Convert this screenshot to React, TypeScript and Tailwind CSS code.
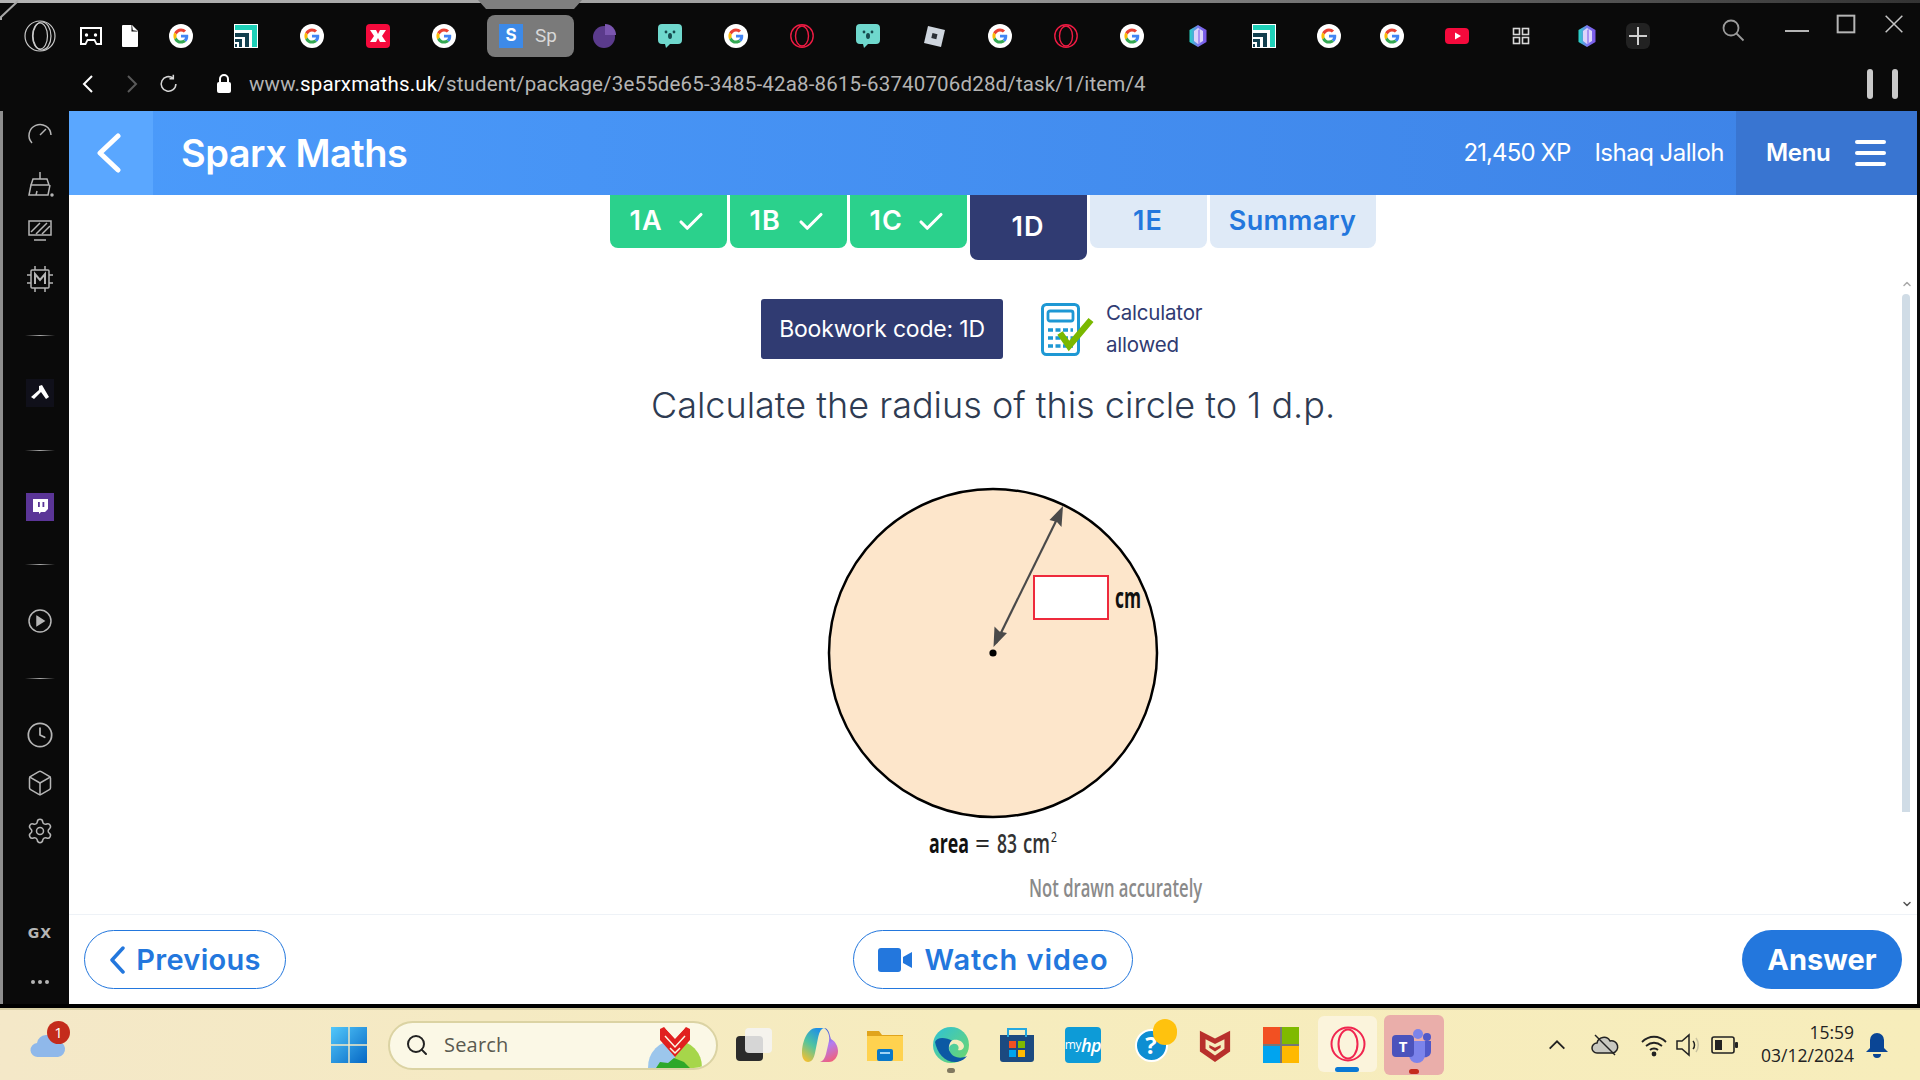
import React from "react";
import { Clock, Box, Settings, ChevronUp, ChevronDown, Check, Search } from "lucide-react";

function G({ className = "" }: { className?: string }) {
  return (
    <svg viewBox="0 0 24 24" className={`w-6 h-6 shrink-0 ${className}`}>
      <circle cx="12" cy="12" r="12" fill="#fff" />
      <g transform="translate(4.4 4.4) scale(0.316)">
        <path fill="#EA4335" d="M24 9.5c3.54 0 6.71 1.22 9.21 3.6l6.85-6.85C35.9 2.38 30.47 0 24 0 14.62 0 6.51 5.38 2.56 13.22l7.98 6.19C12.43 13.72 17.74 9.5 24 9.5z" />
        <path fill="#4285F4" d="M46.98 24.55c0-1.57-.15-3.09-.38-4.55H24v9.02h12.94c-.58 2.96-2.26 5.48-4.78 7.18l7.73 6c4.51-4.18 7.09-10.36 7.09-17.65z" />
        <path fill="#FBBC05" d="M10.53 28.59c-.48-1.45-.76-2.99-.76-4.59s.27-3.14.76-4.59l-7.98-6.19C.92 16.46 0 20.12 0 24c0 3.88.92 7.54 2.56 10.78l7.97-6.19z" />
        <path fill="#34A853" d="M24 48c6.48 0 11.93-2.13 15.89-5.81l-7.73-6c-2.15 1.45-4.92 2.3-8.16 2.3-6.26 0-11.57-4.22-13.47-9.91l-7.98 6.19C6.51 42.62 14.62 48 24 48z" />
      </g>
    </svg>
  );
}
function Teal({ className = "" }: { className?: string }) {
  return (
    <svg viewBox="0 0 24 24" className={`w-6 h-6 shrink-0 ${className}`}>
      <rect width="24" height="24" fill="#fff" />
      <path fill="#1fd1b9" d="M1 1h22v22h-5V6H1z" />
      <path fill="#123f4e" d="M1 9h14v14h-4V13H1zM1 15h7v8H5v-5H1zM1 20h2v3H1z" />
    </svg>
  );
}
function Chat({ className = "" }: { className?: string }) {
  return (
    <svg viewBox="0 0 24 24" className={`w-6 h-6 shrink-0 ${className}`}>
      <path fill="#6fd8cd" d="M4 0h16a4 4 0 0 1 4 4v12a4 4 0 0 1-4 4h-8l-4 4-1-4H4a4 4 0 0 1-4-4V4a4 4 0 0 1 4-4z" />
      <circle cx="8" cy="8" r="1.4" fill="#174b4f" />
      <circle cx="16" cy="8" r="1.4" fill="#174b4f" />
      <ellipse cx="12" cy="12" rx="2" ry="3" fill="#174b4f" />
    </svg>
  );
}
function OperaRed({ className = "" }: { className?: string }) {
  return (
    <svg viewBox="0 0 24 24" className={`w-6 h-6 shrink-0 ${className}`} fill="none" stroke="#ee1b43" strokeWidth="1.4">
      <circle cx="12" cy="12" r="11.2" />
      <ellipse cx="12" cy="12" rx="6.5" ry="10" />
    </svg>
  );
}
function Hex({ className = "" }: { className?: string }) {
  return (
    <svg viewBox="0 0 24 24" className={`w-6 h-6 shrink-0 ${className}`}>
      <defs>
        <linearGradient id="hexg" x1="0" x2="1" y1="0" y2="0">
          <stop offset="0" stopColor="#25d5c5" />
          <stop offset="0.5" stopColor="#7a7af0" />
          <stop offset="1" stopColor="#7b55e8" />
        </linearGradient>
      </defs>
      <path fill="url(#hexg)" d="M12 1l8.5 5v12L12 23l-8.5-5V6z" />
      <path fill="#dcd4fb" d="M12 4l5 3v10l-5 3-4-3V7z" />
      <path fill="#a893f2" d="M12 6l2-1v14l-2 1z" />
    </svg>
  );
}

function TabIcons() {
  return (
    <div className="flex items-center h-[42px]">
      <svg viewBox="0 0 32 32" className="w-8 h-8 ml-6 shrink-0" fill="none" stroke="#c9c9c9" strokeWidth="1.2">
        <circle cx="16" cy="16" r="15" />
        <ellipse cx="18" cy="16" rx="9" ry="14" />
        <ellipse cx="16" cy="16" rx="7.5" ry="13" />
      </svg>
      <svg viewBox="0 0 24 24" className="w-6 h-6 ml-[23px] shrink-0">
        <path fill="#fff" d="M1 3h22v18h-6l-2-4H9l-2 4H1z" />
        <path fill="#0a0a0a" d="M3 5h18v14h-3l-2-4H8l-2 4H3z" />
        <circle cx="7.5" cy="11" r="1.7" fill="#fff" />
        <circle cx="16.5" cy="11" r="1.7" fill="#fff" />
      </svg>
      <svg viewBox="0 0 24 24" className="w-6 h-6 ml-[15px] shrink-0">
        <path fill="#fff" d="M5 1h9l6 6v15a1 1 0 0 1-1 1H5a1 1 0 0 1-1-1V2a1 1 0 0 1 1-1z" />
        <path fill="#0a0a0a" d="M14 1l.8 5.2L20 7l-1 .6h-5.5V1z" />
      </svg>
      <G className="ml-[27px]" />
      <Teal className="ml-[41px]" />
      <G className="ml-[42px]" />
      <svg viewBox="0 0 24 24" className="w-6 h-6 ml-[42px] shrink-0">
        <rect width="24" height="24" rx="4" fill="#f50a3c" />
        <path fill="#fff" d="M4 6h6l2 4 2-4h6l-4 6 4 6h-6l-2-4-2 4H4l4-6z" />
      </svg>
      <G className="ml-[42px]" />
      <div className="ml-[31px] w-[87px] h-[42px] rounded-lg bg-[#7a7a7a] flex items-center pl-3 shrink-0 relative">
        <div className="w-6 h-6 bg-[#3d8ae8] flex items-center justify-center text-white text-[17px] font-bold font-['Inter',sans-serif]">S</div>
        <span className="ml-[12px] w-[26px] overflow-hidden text-[#d8d8d8] text-[19px] font-['Roboto',sans-serif]">Sp</span>
        <div className="absolute right-[9px] top-[10px] w-[10px] h-[22px] bg-gradient-to-r from-transparent to-[#7a7a7a]" />
      </div>
      <svg viewBox="0 0 24 24" className="w-6 h-6 ml-[18px] shrink-0">
        <circle cx="12" cy="13" r="11" fill="#5b3b8c" />
        <path fill="#7b56b0" d="M13 0a11 11 0 0 1 11 11H13z" />
      </svg>
      <Chat className="ml-[42px]" />
      <G className="ml-[42px]" />
      <OperaRed className="ml-[42px]" />
      <Chat className="ml-[42px]" />
      <svg viewBox="0 0 24 24" className="w-6 h-6 ml-[42px] shrink-0">
        <path fill="#cfd6de" d="M6 2l17 4-4 17L2 19z" />
        <path fill="#2a2f36" d="M10.5 9l5 1.2-1.2 5-5-1.2z" />
      </svg>
      <G className="ml-[42px]" />
      <OperaRed className="ml-[42px]" />
      <G className="ml-[42px]" />
      <Hex className="ml-[42px]" />
      <Teal className="ml-[42px]" />
      <G className="ml-[41px]" />
      <G className="ml-[39px]" />
      <svg viewBox="0 0 24 24" className="w-6 h-6 ml-[41px] shrink-0">
        <rect y="4" width="24" height="16" rx="4" fill="#f50a3c" />
        <path fill="#fff" d="M10 8.5l6 3.5-6 3.500z" />
      </svg>
      <svg viewBox="0 0 24 24" className="w-6 h-6 ml-10 shrink-0" fill="none" stroke="#d8d8d8" strokeWidth="1.6">
        <rect x="4.500" y="4.500" width="6" height="6" />
        <rect x="13.500" y="4.500" width="6" height="6" />
        <rect x="4.500" y="13.500" width="6" height="6" />
        <rect x="13.500" y="13.500" width="6" height="6" />
      </svg>
      <Hex className="ml-[42px]" />
      <div className="ml-[27px] w-6 h-[26px] rounded-md bg-[#222222] flex items-center justify-center shrink-0">
        <svg viewBox="0 0 20 20" className="w-5 h-5" stroke="#d0d0d0" strokeWidth="2"><path d="M10 1v18M1 10h18" /></svg>
      </div>
    </div>
  );
}

function TopChrome() {
  return (
    <div className="h-[111px] shrink-0 relative bg-[#0a0a0a]">
      <div className="h-[3px] bg-gradient-to-r from-[#b4b4b4] via-[#9a9a9a] to-[#333333]" />
      <svg viewBox="0 0 20 20" className="absolute left-0 top-0 w-5 h-5" fill="none" stroke="#a8a8a8" strokeWidth="2"><path d="M1 20v-3L18 1" /></svg>
      <svg viewBox="0 0 104 10" className="absolute left-[478px] top-0 w-[104px] h-[10px]"><path fill="#7f7f7f" d="M0 0h104l-8 9H8z" /></svg>
      <div className="flex items-start justify-between pt-[12px] pr-[16px]">
        <TabIcons />
        <div className="flex items-start">
          <svg viewBox="0 0 24 24" className="w-6 h-6 mt-[3px]" fill="none" stroke="#9b9b9b" strokeWidth="1.800"><circle cx="10" cy="10" r="7.500" /><path d="M15.500 15.500l7 7" /></svg>
          <svg viewBox="0 0 24 24" className="w-6 h-6 ml-10" stroke="#b5b5b5" strokeWidth="2"><path d="M0 16h24" /></svg>
          <svg viewBox="0 0 24 24" className="w-[20px] h-[20px] ml-[27px] -mt-px" fill="none" stroke="#b5b5b5" strokeWidth="2.400"><rect x="2" y="2" width="20" height="20" /></svg>
          <svg viewBox="0 0 24 24" className="w-[20px] h-[20px] ml-7 -mt-px" stroke="#c5c5c5" strokeWidth="1.800"><path d="M2 2l20 20M22 2L2 22" /></svg>
        </div>
      </div>
      <div className="flex items-center mt-[9px] h-[36px] relative">
        <svg viewBox="0 0 24 24" className="w-6 h-6 ml-[77px]" fill="none" stroke="#ffffff" strokeWidth="2"><path d="M15 4l-8 8 8 8" /></svg>
        <svg viewBox="0 0 24 24" className="w-6 h-6 ml-[18px]" fill="none" stroke="#5a5a5a" strokeWidth="2"><path d="M9 4l8 8-8 8" /></svg>
        <svg viewBox="0 0 24 24" className="w-[22px] h-[22px] ml-[15px]" fill="none" stroke="#d6d6d6" strokeWidth="1.700"><path d="M19.500 12a8 8 0 1 1-3-6.300" /><path d="M16.700 2v4.200h-4.200" /></svg>
        <svg viewBox="0 0 16 20" className="w-4 h-5 ml-[36px]"><rect x="1" y="8" width="14" height="11" rx="2" fill="#fff" /><path d="M4 9V5a4 4 0 0 1 8 0v4" fill="none" stroke="#fff" strokeWidth="2" /></svg>
        <div className="ml-[17px] text-[20.500px] tracking-[0.16px] text-[#b4b4b4] whitespace-nowrap font-['Roboto',sans-serif]">
          www.<span className="text-white">sparxmaths.uk</span>/student/package/3e55de65-3485-42a8-8615-63740706d28d/task/1/item/4
        </div>
        <div className="ml-auto mr-[22px] flex gap-[19px]">
          <div className="w-[6px] h-[30px] rounded-[3px] bg-[#c9c9c9]" />
          <div className="w-[6px] h-[30px] rounded-[3px] bg-[#c9c9c9]" />
        </div>
      </div>
    </div>
  );
}

function SideSep({ className }: { className: string }) {
  return <div className={`w-[30px] h-px shrink-0 bg-gradient-to-r from-transparent via-[#aaaaaa] to-transparent ${className}`} />;
}

function Sidebar() {
  return (
    <div className="w-[69px] shrink-0 flex flex-col items-center bg-[#0a0a0a] border-l-[3px] border-[#8f8f8f] pl-2">
      <svg viewBox="0 0 28 28" className="w-7 h-7 mt-[10px] shrink-0" fill="none" stroke="#b5b5b5" strokeWidth="1.500"><path d="M6 22A11 11 0 1 1 25 14" /><path d="M14 14l6-6" /></svg>
      <svg viewBox="0 0 28 28" className="w-7 h-7 mt-[21px] shrink-0" fill="none" stroke="#b5b5b5" strokeWidth="1.500"><path d="M14 2v7M7 9h14l2 6H5zM5 15l-2 10h19l2-10M10 25l1-4" /><circle cx="26" cy="25" r="1" fill="#b5b5b5" /></svg>
      <svg viewBox="0 0 28 28" className="w-7 h-7 mt-[18px] shrink-0" fill="none" stroke="#b5b5b5" strokeWidth="1.500"><rect x="3" y="5" width="22" height="14" /><path d="M5 16L14 7M10 18L21 7M16 18l8-8M8 24h12" /></svg>
      <svg viewBox="0 0 28 28" className="w-7 h-7 mt-[21px] shrink-0" fill="none" stroke="#b5b5b5" strokeWidth="1.500">
        <rect x="5" y="5" width="18" height="18" rx="1" />
        <path d="M9 1v4M19 1v4M9 23v4M19 23v4M1 10h4M1 18h4M23 10h4M23 18h4" />
        <path strokeWidth="2" d="M9 19V9l5 6 5-6v10" />
      </svg>
      <SideSep className="mt-[42px]" />
      <div className="w-7 h-7 mt-[43px] shrink-0 bg-[#10101a] flex items-center justify-center">
        <svg viewBox="0 0 20 20" className="w-5 h-5"><path fill="#fff" d="M9 3l3-1 7 12-3 2-5-7-7 7-3-2 8-7z" /></svg>
      </div>
      <SideSep className="mt-[43px]" />
      <div className="w-7 h-7 mt-[42px] shrink-0 bg-[#5b3597] flex items-center justify-center">
        <svg viewBox="0 0 20 20" className="w-5 h-5"><path fill="#fff" d="M3 2h15v10l-3 3h-4l-2 2v-2H3z" /><path fill="#5b3597" d="M8 5h1.800v5H8zM12.500 5h1.800v5h-1.800z" /></svg>
      </div>
      <SideSep className="mt-[43px]" />
      <svg viewBox="0 0 28 28" className="w-7 h-7 mt-[42px] shrink-0" fill="none" stroke="#b5b5b5" strokeWidth="1.500"><circle cx="14" cy="14" r="11" /><path fill="#b5b5b5" d="M11 9.500l7 4.500-7 4.500z" /></svg>
      <SideSep className="mt-[43px]" />
      <Clock className="w-7 h-7 mt-[42px] shrink-0 text-[#b5b5b5]" strokeWidth={1.500} />
      <Box className="w-7 h-7 mt-5 shrink-0 text-[#b5b5b5]" strokeWidth={1.300} />
      <Settings className="w-7 h-7 mt-5 shrink-0 text-[#b5b5b5]" strokeWidth={1.300} />
      <div className="h-5 mt-[78px] shrink-0 text-[14px] leading-5 font-semibold tracking-[1px] text-[#b5b5b5] font-['DejaVu_Sans',sans-serif]">GX</div>
      <div className="flex gap-[3px] mt-[29px] h-5 items-center shrink-0">
        <div className="w-1 h-1 rounded-full bg-[#b5b5b5]" />
        <div className="w-1 h-1 rounded-full bg-[#b5b5b5]" />
        <div className="w-1 h-1 rounded-full bg-[#b5b5b5]" />
      </div>
    </div>
  );
}

function Header() {
  return (
    <div className="h-[84px] shrink-0 flex items-stretch text-white bg-gradient-to-r from-[#4b9bfb] to-[#3d82e6] font-['Inter',sans-serif]">
      <div className="w-[84px] flex items-center justify-center bg-[#5aa7ff] pr-1">
        <svg viewBox="0 0 28 40" className="w-[28px] h-[40px]" fill="none" stroke="#fff" strokeWidth="5" strokeLinecap="round" strokeLinejoin="round"><path d="M23 3L5 20l18 17" /></svg>
      </div>
      <div className="ml-7 self-center text-[38px] font-semibold tracking-[-0.500px]">Sparx Maths</div>
      <div className="ml-auto self-center text-[24px] tracking-[-0.900px]">21,450 XP</div>
      <div className="ml-6 self-center text-[24px] tracking-[-0.500px]">Ishaq Jalloh</div>
      <div className="ml-3 w-[181px] bg-[#3975d1] flex items-center pl-[30px]">
        <span className="text-[24px] font-semibold tracking-[-0.300px]">Menu</span>
        <div className="ml-6 flex flex-col gap-[7px]">
          <div className="w-[31px] h-1 rounded-full bg-white" />
          <div className="w-[31px] h-1 rounded-full bg-white" />
          <div className="w-[31px] h-1 rounded-full bg-white" />
        </div>
      </div>
    </div>
  );
}

function DoneTab({ label }: { label: string }) {
  return (
    <div className="w-[117px] h-[53px] rounded-b-lg bg-[#2bd18c] text-white flex items-center pl-5 text-[27px] font-semibold tracking-[1px]">
      <span>{label}</span>
      <Check className="w-[30px] h-[30px] ml-auto mr-[21px]" strokeWidth={2.500} />
    </div>
  );
}

function Tabs() {
  return (
    <div className="flex justify-center items-start gap-[3px] pr-px font-['Inter',sans-serif]">
      <DoneTab label="1A" />
      <DoneTab label="1B" />
      <DoneTab label="1C" />
      <div className="w-[117px] h-[65px] rounded-b-lg bg-[#303b72] text-white flex items-center justify-center text-[27px] font-semibold tracking-[1px]">1D</div>
      <div className="w-[117px] h-[53px] rounded-b-lg bg-[#dfeaf7] text-[#2377dd] flex items-center justify-center text-[27px] font-semibold tracking-[1px]">1E</div>
      <div className="w-[166px] h-[53px] rounded-b-lg bg-[#dfeaf7] text-[#2377dd] flex items-center justify-center text-[27px] font-semibold tracking-[0.300px]">Summary</div>
    </div>
  );
}

function CalcIcon() {
  return (
    <svg viewBox="0 0 53 53" className="w-[53px] h-[53px]" fill="none">
      <rect x="1.500" y="1.500" width="36" height="50" rx="4" stroke="#1e98d4" strokeWidth="3" />
      <rect x="7" y="8" width="25" height="10" rx="2" stroke="#1e98d4" strokeWidth="2.800" />
      <path stroke="#1e98d4" strokeWidth="3.500" strokeDasharray="5 2.500" d="M7 27h25M7 35h25M7 43h25" />
      <path stroke="#7ab800" strokeWidth="6.500" d="M19 30l9 13L50 17" />
    </svg>
  );
}

function Diagram() {
  const font = "'Open Sans',sans-serif";
  return (
    <div className="relative w-[420px] h-[430px] mx-auto mt-[48px] shrink-0">
      <svg viewBox="0 0 420 430" className="w-[420px] h-[430px]">
        <circle cx="210" cy="173" r="164" fill="#fde6cb" stroke="#000" strokeWidth="2.500" />
        <path d="M213 163L277 33" stroke="#4a4a4a" strokeWidth="2.200" />
        <path fill="#4a4a4a" d="M280 26l-1.500 21-4.500-5-7.500-2zM210.500 167l1-20.500 5 5 7.500 1.500z" />
        <circle cx="210" cy="173" r="3.600" fill="#000" />
        <text transform="translate(332 128) scale(0.62 1)" fontSize="28" fontWeight="700" fontFamily={font} textLength="42" lengthAdjust="spacingAndGlyphs" fill="#111">cm</text>
        <text transform="translate(146 373) scale(0.667 1)" fontSize="27" fontWeight="700" fontFamily={font} textLength="60" lengthAdjust="spacingAndGlyphs" fill="#111">area</text>
        <text transform="translate(192 373)" fontSize="27" fontFamily={font} textLength="15" lengthAdjust="spacingAndGlyphs" fill="#222">=</text>
        <text transform="translate(214 373) scale(0.645 1)" fontSize="27" fontWeight="600" fontFamily={font} textLength="31" lengthAdjust="spacingAndGlyphs" fill="#333">83</text>
        <text transform="translate(240 373) scale(0.71 1)" fontSize="27" fontWeight="600" fontFamily={font} textLength="38" lengthAdjust="spacingAndGlyphs" fill="#333">cm</text>
        <text transform="translate(268 362) scale(0.75 1)" fontSize="14" fontFamily={font} textLength="8" lengthAdjust="spacingAndGlyphs" fill="#222">2</text>
        <text transform="translate(246 417) scale(0.63 1)" fontSize="26" fontWeight="600" fontFamily={font} textLength="275" lengthAdjust="spacingAndGlyphs" fill="#8a8a8a">Not drawn accurately</text>
      </svg>
      <div className="absolute left-[250px] top-[95px] w-[76px] h-[45px] bg-white border-2 border-[#ee2a3c]" />
    </div>
  );
}

function Main() {
  return (
    <div className="flex-1 min-h-0 relative bg-white overflow-hidden">
      <Tabs />
      <div className="flex justify-center items-center mt-[37px] font-['Inter',sans-serif]">
        <div className="w-[242px] h-[60px] rounded-[3px] bg-[#303b72] text-white flex items-center justify-center text-[23px] tracking-[-0.200px]">Bookwork code: 1D</div>
        <div className="ml-[38px]"><CalcIcon /></div>
        <div className="ml-3 w-[119px] text-[20.500px] leading-[32px] text-[#303b72] tracking-[-0.200px]">
          <div>Calculator</div>
          <div>allowed</div>
        </div>
      </div>
      <div className="mt-[17px] h-[54px] leading-[54px] text-center text-[36px] font-light text-[#2e3b52] font-['Inter',sans-serif]">Calculate the radius of this circle to 1 d.p.</div>
      <Diagram />
      <div className="absolute right-[7px] top-[99px] bottom-[102px] w-2 rounded-t-sm bg-[#d0dce6]" />
      <ChevronUp className="absolute right-[4px] top-[83px] w-3 h-3 text-[#aaaaaa]" strokeWidth={3} />
      <ChevronDown className="absolute right-[4px] bottom-[4px] w-3 h-3 text-[#555555]" strokeWidth={3} />
    </div>
  );
}

function Footer() {
  return (
    <div className="h-[90px] shrink-0 border-t border-[#eef2f7] bg-white grid grid-cols-[1fr_auto_1fr] items-center pl-[15px] pr-[15px] font-['Inter',sans-serif]">
      <div className="justify-self-start w-[202px] h-[59px] rounded-full border border-[#2377dd] flex items-center justify-center text-[#2377dd] text-[29px] font-semibold tracking-[0.300px]">
        <svg viewBox="0 0 16 30" className="w-4 h-[30px] mr-[11px]" fill="none" stroke="#2377dd" strokeWidth="3.500" strokeLinecap="round" strokeLinejoin="round"><path d="M14 3L3 15l11 12" /></svg>
        Previous
      </div>
      <div className="w-[280px] h-[59px] rounded-full border border-[#2377dd] flex items-center justify-center text-[#2377dd] text-[29px] font-semibold tracking-[0.900px]">
        <svg viewBox="0 0 34 24" className="w-[34px] h-6 mr-[13px]" fill="#2377dd"><rect width="23" height="24" rx="3" /><path d="M25 9l9-5v16l-9-5z" /></svg>
        Watch video
      </div>
      <div className="justify-self-end w-[160px] h-[59px] rounded-full bg-[#2377dd] flex items-center justify-center text-white text-[29px] font-bold">Answer</div>
    </div>
  );
}

function TaskIcon({ className, children }: { className: string; children: React.ReactNode }) {
  return <div className={`w-9 h-9 shrink-0 flex items-center justify-center ${className}`}>{children}</div>;
}

function Taskbar() {
  return (
    <div className="h-[72px] shrink-0 border-t-2 border-[#d8cfa5] bg-gradient-to-r from-[#f4e8c8] via-[#f6ecbe] to-[#f7edbb] flex items-center relative font-['Open_Sans',sans-serif]">
      <div className="relative ml-[30px] -mt-1 w-9 h-9 shrink-0">
        <svg viewBox="0 0 36 36" className="w-9 h-9"><path fill="#8fb8ea" d="M8 32a7 7 0 0 1-1-14 10 10 0 0 1 19-2 8 8 0 0 1 2 16z" /></svg>
        <div className="absolute left-[17px] -top-1 w-[23px] h-[23px] rounded-full bg-[#c42b1c] text-white text-[15px] flex items-center justify-center">1</div>
      </div>
      <svg viewBox="0 0 36 36" className="w-9 h-9 ml-[265px] shrink-0">
        <defs><linearGradient id="win" x1="0" y1="0" x2="1" y2="1"><stop offset="0" stopColor="#52c8fb" /><stop offset="1" stopColor="#0667c4" /></linearGradient></defs>
        <path fill="url(#win)" d="M0 0h17.300v17.300H0zM18.700 0H36v17.300H18.700zM0 18.700h17.300V36H0zM18.700 18.700H36V36H18.700z" />
      </svg>
      <div className="ml-[21px] w-[330px] h-[49px] shrink-0 rounded-full bg-[#fbf8e6] border-2 border-[#dbd3a3] flex items-center pl-[15px] overflow-hidden relative">
        <Search className="w-6 h-6 text-[#222222]" strokeWidth={2} />
        <span className="ml-[15px] text-[20px] text-[#5a5a50] tracking-[0.2px]">Search</span>
        <svg viewBox="0 0 58 42" className="absolute right-[12px] bottom-0 w-[58px] h-[42px]">
          <path fill="#9cc6ec" d="M2 42a27 27 0 0 1 27-28v28z" />
          <path fill="#a6d64a" d="M29 14a27 27 0 0 1 27 28H29z" />
          <path fill="#2ea829" d="M10 42l4-6 8 1 6-5 10 4 6 6z" />
          <path fill="#e1201f" d="M14 3l4-2 11 11 11-11 4 2 0 11-15 17-15-17z" />
          <path stroke="#fbf8e6" strokeWidth="1.500" fill="none" d="M20 2l9 10 9-10M19 10l10 11 10-11M24 22l5 5 5-5" />
        </svg>
      </div>
      <TaskIcon className="ml-[18px]">
        <div className="relative w-9 h-9">
          <div className="absolute left-0 bottom-[2px] w-[27px] h-[25px] rounded-sm bg-[#2b2b2b]" />
          <div className="absolute left-[9px] top-[1px] w-[27px] h-[25px] rounded-sm bg-[#f4f4f4]/85" />
        </div>
      </TaskIcon>
      <TaskIcon className="ml-[30px]">
        <svg viewBox="0 0 36 36" className="w-9 h-9">
          <defs>
            <linearGradient id="copa" x1="0.7" y1="0" x2="0.2" y2="1"><stop offset="0" stopColor="#1f8fe8" /><stop offset="0.5" stopColor="#4fc4a0" /><stop offset="1" stopColor="#f5c030" /></linearGradient>
            <linearGradient id="copb" x1="0.3" y1="0" x2="0.6" y2="1"><stop offset="0" stopColor="#2a5fd8" /><stop offset="0.5" stopColor="#b37cf0" /><stop offset="1" stopColor="#f0607c" /></linearGradient>
          </defs>
          <path fill="url(#copa)" d="M14 1h8c-4 1-5 6-6 10l-3 15c-1 5-3 9-7 9-3 0-6-3-6-9C0 14 6 1 14 1z" />
          <path fill="url(#copb)" d="M22 1c3 0 5 3 6 8l1 3c4 2 7 7 7 12 0 6-4 11-9 11h-9c3-1 5-4 6-8l3-13c1-5-1-11-5-13z" />
        </svg>
      </TaskIcon>
      <TaskIcon className="ml-[29px]">
        <svg viewBox="0 0 36 36" className="w-9 h-9">
          <path fill="#e0a41c" d="M0 4h12l3 4h21v26H0z" />
          <path fill="#ffd24f" d="M0 9h36v25H0z" />
          <rect x="10" y="22" width="16" height="12" rx="2" fill="#0a78c8" />
          <rect x="13" y="25" width="10" height="2" fill="#9fd4f4" />
        </svg>
      </TaskIcon>
      <TaskIcon className="ml-[30px] relative">
        <svg viewBox="0 0 36 36" className="w-9 h-9">
          <defs><linearGradient id="edge" x1="0" y1="0" x2="1" y2="1"><stop offset="0" stopColor="#2dc1d8" /><stop offset="1" stopColor="#70d868" /></linearGradient></defs>
          <circle cx="18" cy="18" r="18" fill="url(#edge)" />
          <path fill="#0c59a4" d="M2 15C4 26 12 36 24 35c5-1 8-3 10-6-6 3-14 2-17-4-3-5 0-9 3-11C12 10 4 10 2 15z" />
          <path fill="#f6ecbe" d="M20 13c5-1 10 1 11 6 0 3-3 5-6 4 2-3-1-7-5-6-3 1-5 4-3 7-2-5 0-10 3-11z" />
        </svg>
        <div className="absolute left-[14px] -bottom-[10px] w-2 h-[5px] rounded-full bg-[#80785f]" />
      </TaskIcon>
      <TaskIcon className="ml-[30px]">
        <svg viewBox="0 0 36 36" className="w-9 h-9">
          <path fill="#1c4a80" d="M1 8h34v24a3 3 0 0 1-3 3H4a3 3 0 0 1-3-3z" />
          <path fill="none" stroke="#25a8e0" strokeWidth="2" d="M9 10V2h18v8" />
          <rect x="10" y="14" width="7" height="7" fill="#f25022" /><rect x="19" y="14" width="7" height="7" fill="#7fba00" />
          <rect x="10" y="23" width="7" height="7" fill="#00a4ef" /><rect x="19" y="23" width="7" height="7" fill="#ffb900" />
        </svg>
      </TaskIcon>
      <TaskIcon className="ml-[30px]">
        <div className="w-9 h-9 rounded-sm bg-[#0d9bd7] text-white flex items-center justify-center text-[12px] tracking-[-0.500px]">my<span className="text-[18px] italic font-semibold">hp</span></div>
      </TaskIcon>
      <TaskIcon className="ml-8 relative">
        <div className="w-[33px] h-[33px] rounded-full bg-[#0e8ed2] border-2 border-white text-white flex items-center justify-center text-[24px] font-bold">?</div>
        <div className="absolute left-[20px] -top-[8px] w-[24px] h-[26px] rounded-full bg-[#ffc20e]" />
      </TaskIcon>
      <TaskIcon className="ml-7">
        <svg viewBox="0 0 36 36" className="w-[34px] h-[36px]"><path fill="#b8302c" d="M2 3l16 8 16-8v22L18 36 2 25z" /><path fill="#f6ecbe" d="M8 12l10 5 10-5v10l-10 7-10-7z" /><path fill="#b8302c" d="M12 18l6 3 6-3v3l-6 4-6-4z" /></svg>
      </TaskIcon>
      <TaskIcon className="ml-[30px]">
        <svg viewBox="0 0 36 36" className="w-9 h-9">
          <rect width="17.500" height="17.500" fill="#f25022" /><rect x="18.500" width="17.500" height="17.500" fill="#7fba00" />
          <rect y="18.500" width="17.500" height="17.500" fill="#00a4ef" /><rect x="18.500" y="18.500" width="17.500" height="17.500" fill="#ffb900" />
          <rect x="17" width="2" height="36" fill="#777" /><rect y="17" width="36" height="2" fill="#777" />
        </svg>
      </TaskIcon>
      <div className="ml-[19px] w-[59px] h-[56px] shrink-0 rounded-md bg-[#fbf4dc] relative flex items-center justify-center -mt-[2px]">
        <svg viewBox="0 0 36 36" className="w-9 h-9" fill="none" stroke="#f0254f" strokeWidth="2"><circle cx="18" cy="18" r="16.500" /><ellipse cx="18" cy="18" rx="9.500" ry="14.500" /></svg>
        <div className="absolute left-[17px] bottom-0 w-[24px] h-[5px] rounded-full bg-[#0a78d4]" />
      </div>
      <div className="ml-[7px] w-[60px] h-[60px] shrink-0 rounded-md bg-[#eaaeaa] relative flex items-center justify-center">
        <svg viewBox="0 0 36 36" className="w-9 h-9">
          <circle cx="22" cy="7" r="5" fill="#7b83eb" /><circle cx="31" cy="10" r="4" fill="#5059c9" />
          <path fill="#5059c9" d="M26 14h9v10c0 5-4 7-8 6z" />
          <path fill="#7b83eb" d="M11 14h18v14a8 8 0 0 1-16 0z" />
        </svg>
        <div className="absolute left-[8px] top-[20px] w-[22px] h-[22px] rounded-sm bg-[#4b53bc] text-white text-[15px] font-bold flex items-center justify-center">T</div>
        <div className="absolute left-[25px] bottom-[1px] w-[10px] h-[5px] rounded-full bg-[#c42b1c]" />
      </div>
      <svg viewBox="0 0 24 24" className="w-[22px] h-[22px] ml-[102px] shrink-0" fill="none" stroke="#222" strokeWidth="2"><path d="M4 16l8-8 8 8" /></svg>
      <svg viewBox="0 0 28 28" className="w-7 h-7 ml-[23px] shrink-0">
        <path fill="#c8c8c0" stroke="#222" strokeWidth="1.500" d="M6 22a5 5 0 0 1 0-10 7 7 0 0 1 13-2 6 6 0 0 1 3 12z" />
        <path stroke="#222" strokeWidth="1.500" d="M4 4l20 20" />
      </svg>
      <svg viewBox="0 0 28 28" className="w-7 h-7 ml-[21px] shrink-0" fill="none" stroke="#222" strokeWidth="1.800"><path d="M2 11c7-7 17-7 24 0M6 15c5-4 11-4 16 0M10 19c2-2 6-2 8 0" /><circle cx="14" cy="23" r="1.500" fill="#222" /></svg>
      <svg viewBox="0 0 28 28" className="w-7 h-7 ml-[6px] shrink-0" fill="none" stroke="#222" strokeWidth="1.500"><path d="M3 10h5l7-6v20l-7-6H3z" /><path d="M19 10c2 2 2 6 0 8" /><path stroke="#c8c2a0" d="M22 7c3 4 3 10 0 14" /></svg>
      <svg viewBox="0 0 28 20" className="w-7 h-5 ml-[9px] shrink-0"><rect x="1" y="2" width="22" height="16" rx="2" fill="none" stroke="#222" strokeWidth="1.600" /><rect x="4" y="5" width="7" height="10" fill="#222" /><rect x="24" y="7" width="3" height="6" rx="1" fill="#222" /></svg>
      <div className="ml-[19px] w-[96px] -mt-[2px] shrink-0 text-right text-[#222] text-[17.500px] leading-[23px]">
        <div>15:59</div>
        <div>03/12/2024</div>
      </div>
      <svg viewBox="0 0 24 28" className="w-6 h-7 ml-[11px] shrink-0"><path fill="#0a4595" d="M12 2a7 7 0 0 1 7 7v8l4 4H1l4-4V9a7 7 0 0 1 7-7z" /><path fill="#0a4595" d="M8 23h8a4 4 0 0 1-8 0z" /></svg>
    </div>
  );
}

export default function App() {
  return (
    <div className="w-[1920px] h-[1080px] flex flex-col overflow-hidden bg-[#0a0a0a]">
      <TopChrome />
      <div className="h-[893px] shrink-0 flex">
        <Sidebar />
        <div className="w-[1848px] shrink-0 flex flex-col">
          <Header />
          <Main />
          <Footer />
        </div>
      </div>
      <div className="h-1 shrink-0 bg-black" />
      <Taskbar />
    </div>
  );
}
